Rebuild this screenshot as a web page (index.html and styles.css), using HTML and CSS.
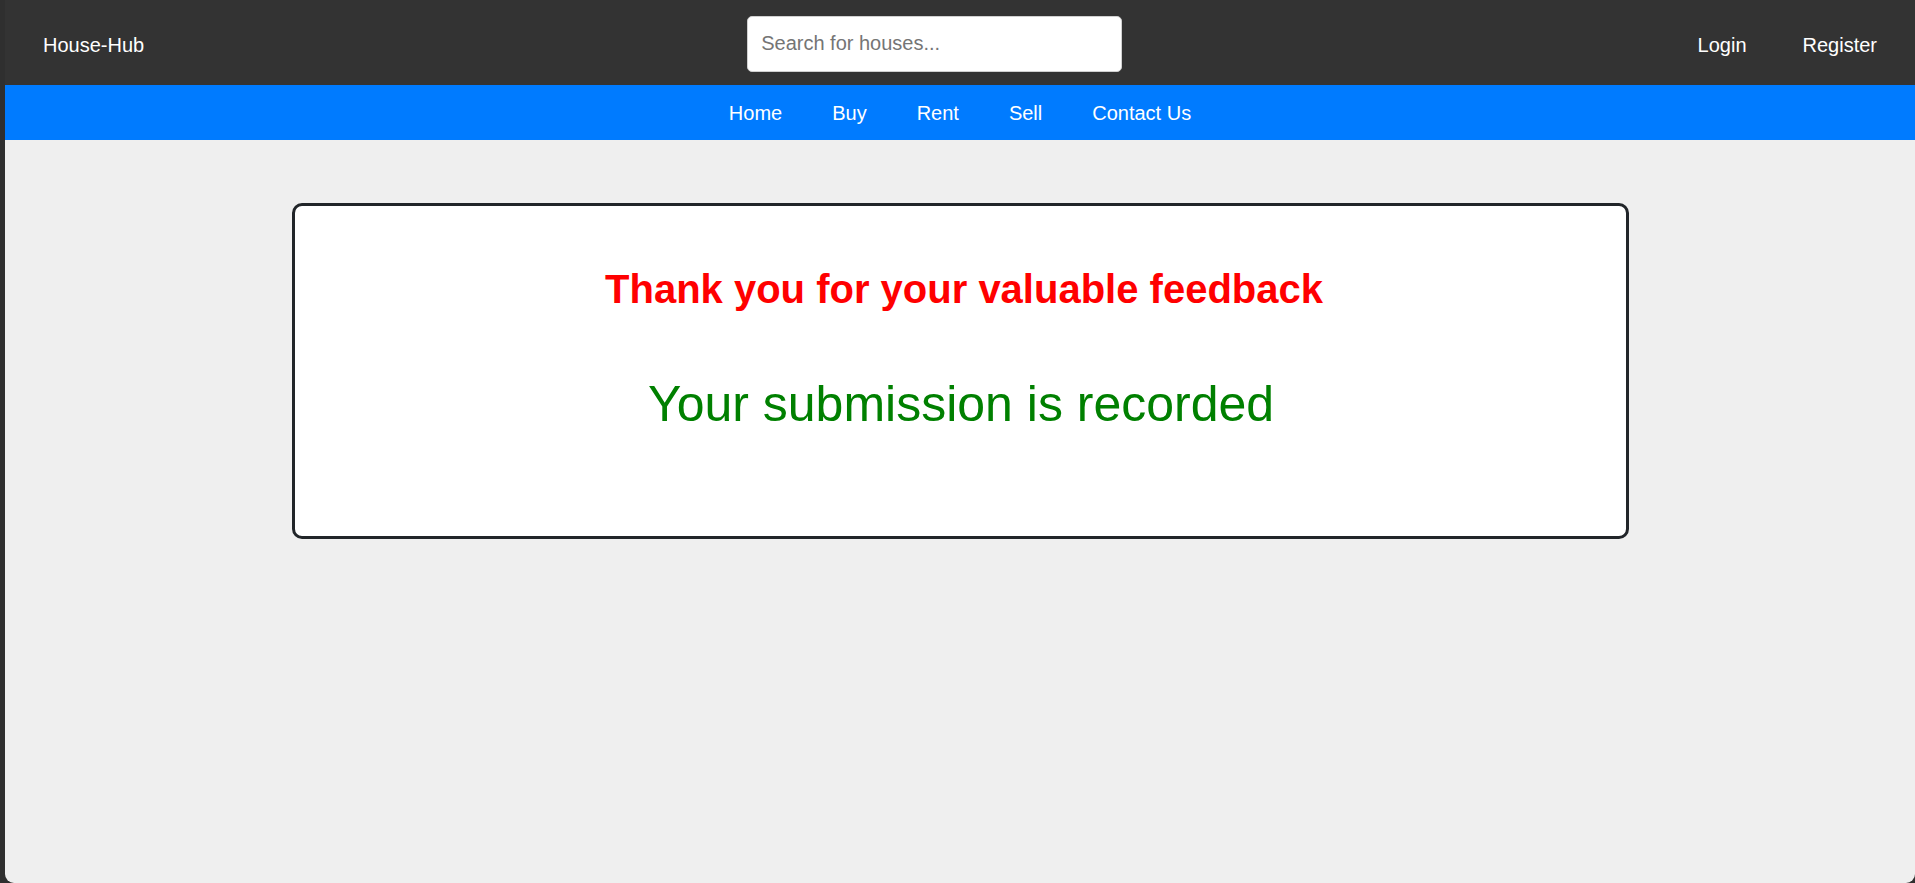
FILE: index.html
```html
<!DOCTYPE html>
<html lang="en">
<head>
<meta charset="utf-8">
<title>House-Hub</title>
<link rel="stylesheet" href="styles.css">
</head>
<body>
<div class="window">
  <header class="topbar">
    <a class="logo" href="#">House-Hub</a>
    <input class="search" type="text" placeholder="Search for houses...">
    <nav class="auth">
      <a href="#">Login</a>
      <a href="#" class="register">Register</a>
    </nav>
  </header>
  <nav class="mainnav">
    <a href="#">Home</a>
    <a href="#">Buy</a>
    <a href="#">Rent</a>
    <a href="#">Sell</a>
    <a href="#">Contact Us</a>
  </nav>
  <main class="content">
    <section class="card">
      <h1 class="thanks">Thank you for your valuable feedback</h1>
      <p class="recorded">Your submission is recorded</p>
    </section>
  </main>
</div>
</body>
</html>
```

FILE: styles.css
```css
html, body {
  margin: 0;
  padding: 0;
}

body {
  background: #2f2f2f;
  height: 883px;
  overflow: hidden;
  font-family: "Liberation Sans", Arial, sans-serif;
}

.window {
  margin-left: 5px;
  height: 883px;
  background: #efefef;
  border-radius: 0 0 9px 9px;
  overflow: hidden;
}

.topbar {
  box-sizing: border-box;
  height: 85px;
  padding: 6px 38px 0 38px;
  background: #333333;
  display: flex;
  align-items: center;
}

.topbar a {
  color: #ffffff;
  text-decoration: none;
  font-size: 20px;
}

.logo {
  flex: 0 0 auto;
}

.search {
  box-sizing: border-box;
  margin-left: 603px;
  margin-top: -4px;
  width: 375px;
  height: 56px;
  border: 1px solid #d0d0d0;
  border-radius: 5px;
  padding: 0 13px;
  font-family: "Liberation Sans", Arial, sans-serif;
  font-size: 20px;
  color: #333;
  background: #ffffff;
  outline: none;
}

.search::placeholder {
  color: #757575;
}

.auth {
  margin-left: auto;
  display: flex;
  align-items: center;
}

.auth .register {
  margin-left: 56px;
}

.mainnav {
  box-sizing: border-box;
  height: 55px;
  padding-top: 2px;
  background: #007bff;
  display: flex;
  justify-content: center;
  align-items: center;
  gap: 50px;
}

.mainnav a {
  color: #ffffff;
  text-decoration: none;
  font-size: 20px;
}

.content {
  padding-top: 63px;
}

.card {
  box-sizing: border-box;
  width: 70%;
  margin: 0 auto;
  background: #ffffff;
  border: 3px solid #212529;
  border-radius: 10px;
  padding: 61px 0 103px 8px;
  text-align: center;
}

.thanks {
  margin: 0;
  font-size: 40px;
  font-weight: bold;
  line-height: normal;
  color: #ff0000;
}

.recorded {
  margin: 63px 0 0 0;
  padding-right: 6px;
  font-size: 50px;
  line-height: normal;
  color: #008000;
}
```
